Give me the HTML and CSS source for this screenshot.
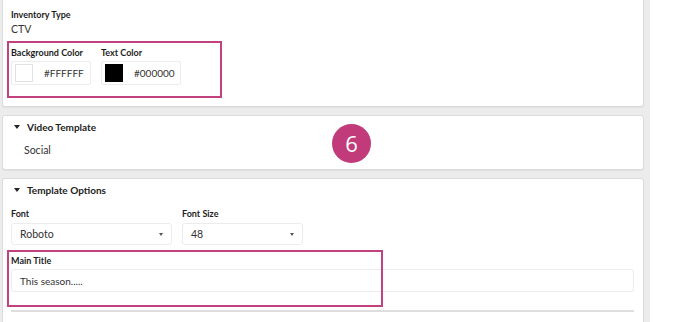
FILE: index.html
```html
<!DOCTYPE html>
<html>
<head>
<meta charset="utf-8">
<link rel="stylesheet" href="styles.css">
</head>
<body>
<div class="page">
  <div class="column">
    <section class="card card-top">
      <div class="label">Inventory Type</div>
      <div class="value">CTV</div>
      <div class="color-row">
        <div class="field">
          <div class="label">Background Color</div>
          <div class="color-box">
            <span class="swatch swatch-white"></span>
            <span class="hex">#FFFFFF</span>
          </div>
        </div>
        <div class="field">
          <div class="label">Text Color</div>
          <div class="color-box">
            <span class="swatch swatch-black"></span>
            <span class="hex">#000000</span>
          </div>
        </div>
      </div>
      <div class="annot annot-colors"></div>
    </section>

    <section class="card card-video">
      <div class="header"><span class="caret"></span>Video Template</div>
      <div class="value indented">Social</div>
      <div class="badge">6</div>
    </section>

    <section class="card card-options">
      <div class="header"><span class="caret"></span>Template Options</div>
      <div class="select-row">
        <div class="field">
          <div class="label">Font</div>
          <div class="select select-font"><span>Roboto</span><span class="arrow"></span></div>
        </div>
        <div class="field">
          <div class="label">Font Size</div>
          <div class="select select-size"><span>48</span><span class="arrow"></span></div>
        </div>
      </div>
      <div class="label title-label">Main Title</div>
      <div class="input">This season.....</div>
      <div class="rule"></div>
      <div class="annot annot-title"></div>
    </section>
  </div>
</div>
</body>
</html>
```

FILE: styles.css
```css
* { box-sizing: border-box; }

html, body {
  margin: 0;
  padding: 0;
  background: #ffffff;
}

body {
  font-family: Lato, "Liberation Sans", sans-serif;
  color: #222;
}

.page {
  width: 688px;
  height: 322px;
  overflow: hidden;
}

.column {
  width: 650px;
  height: 322px;
  background: #ececec;
  padding: 0 6px 0 2px;
  display: flex;
  flex-direction: column;
  gap: 8px;
}

.card {
  position: relative;
  background: #fff;
  border: 1px solid #dcdcdc;
  border-radius: 3px;
  box-shadow: 0 1px 1px rgba(0,0,0,0.06);
  padding: 4px 9px 12px 8px;
}

.card-top {
  border-top: none;
  border-radius: 0 0 3px 3px;
  padding-top: 9px;
  padding-bottom: 21px;
}

.card-options {
  flex: 1;
  border-bottom: none;
  border-radius: 3px 3px 0 0;
}

.label {
  font-size: 9px;
  font-weight: 700;
  line-height: 12px;
  color: #1e1e1e;
}

.value {
  font-size: 10.5px;
  line-height: 14px;
  color: #333;
  margin-top: 1px;
}

.indented {
  margin-left: 13px;
  margin-top: 9px;
}

.color-row,
.select-row {
  display: flex;
  gap: 10px;
  margin-top: 11px;
}

.color-box {
  margin-top: 2px;
  width: 80px;
  height: 24px;
  border: 1px solid #ececec;
  border-radius: 2px;
  display: flex;
  align-items: center;
  padding-left: 3px;
}

.swatch {
  width: 18px;
  height: 18px;
  display: block;
}

.swatch-white { background: #fff; border: 1px solid #e2e2e2; }
.swatch-black { background: #000; }

.hex {
  font-size: 10px;
  color: #333;
  margin-left: 11px;
}

.header {
  font-size: 10px;
  font-weight: 700;
  line-height: 14px;
  display: flex;
  align-items: center;
  padding-left: 3px;
}

.caret {
  width: 0;
  height: 0;
  border-left: 3px solid transparent;
  border-right: 3px solid transparent;
  border-top: 4px solid #222;
  margin-right: 7px;
}

.badge {
  position: absolute;
  left: 329px;
  top: 8px;
  width: 39px;
  height: 39px;
  border-radius: 50%;
  background: #c13b7a;
  color: #fff;
  font-family: "Open Sans", sans-serif;
  font-size: 22px;
  line-height: 39px;
  text-align: center;
}

.select {
  margin-top: 3px;
  height: 22px;
  border: 1px solid #ececec;
  border-radius: 3px;
  display: flex;
  align-items: center;
  justify-content: space-between;
  padding: 0 8px 0 8px;
  font-size: 10.5px;
  color: #333;
}

.select-font { width: 161px; }
.select-size { width: 121px; }

.arrow {
  width: 0;
  height: 0;
  border-left: 2.5px solid transparent;
  border-right: 2.5px solid transparent;
  border-top: 3px solid #555;
}

.title-label {
  margin-top: 10px;
}

.input {
  margin-top: 2px;
  height: 23px;
  border: 1px solid #ececec;
  border-radius: 3px;
  font-size: 10px;
  color: #333;
  display: flex;
  align-items: center;
  padding-left: 8px;
}

.rule {
  margin-top: 18px;
  height: 2px;
  background: #dedede;
}

.annot {
  position: absolute;
  border: 2px solid #c2417f;
  pointer-events: none;
}

.annot-colors {
  left: 4px;
  top: 41px;
  width: 215px;
  height: 57px;
}

.annot-title {
  left: 4px;
  top: 71px;
  width: 376px;
  height: 57px;
}
```
